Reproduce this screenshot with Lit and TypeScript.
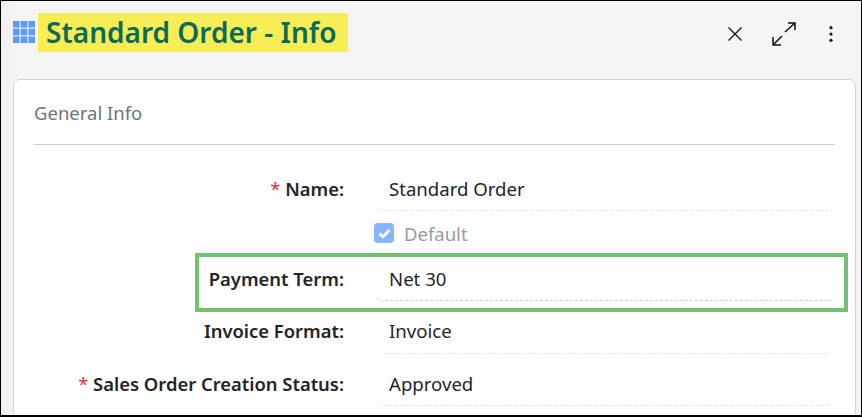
import { LitElement, html, svg, css } from "lit";
import { customElement } from "lit/decorators.js";

@customElement("app-root")
export class AppRoot extends LitElement {
  static styles = css`
    :host {
      display: block;
      width: 862px;
      height: 417px;
      box-sizing: border-box;
      border: 1px solid #000;
      border-width: 1px 1px 2px 1px;
      overflow: hidden;
      background: linear-gradient(to right, #eeeeee, #f5f5f5 14px);
      font-family: "Noto Sans", "Open Sans", sans-serif;
      color: #212529;
    }
    .head {
      height: 78px;
      box-sizing: border-box;
      padding: 12px 0 0 12px;
      display: flex;
      align-items: flex-start;
    }
    .grid {
      width: 22px;
      height: 22px;
      margin-top: 8px;
      flex: none;
    }
    .title {
      margin: 0 0 0 3px;
      width: 310px;
      height: 39px;
      box-sizing: border-box;
      padding-left: 8px;
      background: #f8ec57;
      color: #0b6b57;
      font-size: 28px;
      font-weight: 600;
      line-height: 39px;
      white-space: nowrap;
    }
    .tools {
      margin-left: auto;
      margin-right: 28px;
      margin-top: 9px;
      display: flex;
      align-items: center;
      gap: 29px;
    }
    .tools svg { display: block; }
    .tools .dots { margin-left: 4px; }
    .card {
      margin: 0 5px 0 12px;
      height: 340px;
      box-sizing: border-box;
      background: #fff;
      border: 1px solid #d4d4d4;
      border-radius: 7px;
      padding: 0 20px;
    }
    .card-title {
      height: 65px;
      box-sizing: border-box;
      padding-top: 19px;
      line-height: 28px;
      font-size: 18.5px;
      color: #6c757d;
      border-bottom: 1px solid #d0d0d0;
    }
    .row {
      position: relative;
      display: grid;
      grid-template-columns: 310px 1fr;
      column-gap: 32px;
    }
    .label {
      text-align: right;
      font-weight: 600;
      font-size: 18.4px;
      line-height: 26px;
      padding-top: var(--pad);
      white-space: nowrap;
    }
    .req { color: #dc3545; font-weight: 400; }
    .value {
      height: var(--h);
      box-sizing: border-box;
      margin-right: 2px;
      padding: var(--pad) 0 0 13px;
      line-height: 26px;
      border-bottom: 1px dashed #dde3ea;
      border-bottom-left-radius: 6px;
      border-bottom-right-radius: 6px;
      font-size: 18.6px;
    }
    .r-name { --h: 66px; --pad: 31px; }
    .r-pay { --h: 46px; --pad: 11px; }
    .r-pay .value { border-bottom-color: #bcd2ee; margin-right: 0; }
    .r-inv { --h: 53px; --pad: 17px; }
    .r-app { --h: 52px; --pad: 17px; }
    .check-row {
      display: flex;
      align-items: center;
      gap: 10px;
      height: 44px;
      margin-left: 340px;
      color: #9a9a9a;
      font-size: 18.5px;
    }
    .box {
      width: 20px;
      height: 20px;
      border-radius: 4px;
      background: #86b7fe;
      display: flex;
      align-items: center;
      justify-content: center;
    }
    .mark {
      position: absolute;
      left: 161px;
      top: -2px;
      width: 653px;
      height: 59px;
      box-sizing: border-box;
      border: 4px solid #73c271;
      pointer-events: none;
    }
  `;

  render() {
    const cells = [];
    for (let y = 0; y < 3; y++) {
      for (let x = 0; x < 3; x++) {
        cells.push(svg`<rect x=${x * 7.7} y=${y * 7.7} width="6.6" height="6.6" fill="#5c9aff"></rect>`);
      }
    }
    return html`
      <div class="head">
        <svg class="grid" viewBox="0 0 22 22">${cells}</svg>
        <h1 class="title">Standard Order - Info</h1>
        <div class="tools">
          <svg width="16" height="16" viewBox="0 0 16 16" fill="none" stroke="#111" stroke-width="1.3">
            <path d="M1.5 1.5 L14.5 14.5 M14.5 1.5 L1.5 14.5"></path>
          </svg>
          <svg width="24" height="24" viewBox="0 0 24 24" fill="none" stroke="#111" stroke-width="1.5">
            <path d="M13 10 L23 1 M16 1 H23 V8 M10 14 L1 23 M1 15 V23 H9"></path>
          </svg>
          <svg class="dots" width="4" height="16" viewBox="0 0 4 16" fill="#111">
            <circle cx="2" cy="1.7" r="1.6"></circle>
            <circle cx="2" cy="8" r="1.6"></circle>
            <circle cx="2" cy="14.3" r="1.6"></circle>
          </svg>
        </div>
      </div>
      <section class="card">
        <div class="card-title">General Info</div>
        <div class="row r-name">
          <div class="label"><span class="req">*</span> Name:</div>
          <div class="value">Standard Order</div>
        </div>
        <div class="check-row">
          <span class="box">
            <svg width="13" height="11" viewBox="0 0 13 11" fill="none" stroke="#fff" stroke-width="2.6">
              <path d="M1.5 5.5 L5 9 L11.5 2"></path>
            </svg>
          </span>
          <span>Default</span>
        </div>
        <div class="row r-pay">
          <div class="label">Payment Term:</div>
          <div class="value">Net 30</div>
          <span class="mark"></span>
        </div>
        <div class="row r-inv">
          <div class="label">Invoice Format:</div>
          <div class="value">Invoice</div>
        </div>
        <div class="row r-app">
          <div class="label"><span class="req">*</span> Sales Order Creation Status:</div>
          <div class="value">Approved</div>
        </div>
      </section>
    `;
  }
}
